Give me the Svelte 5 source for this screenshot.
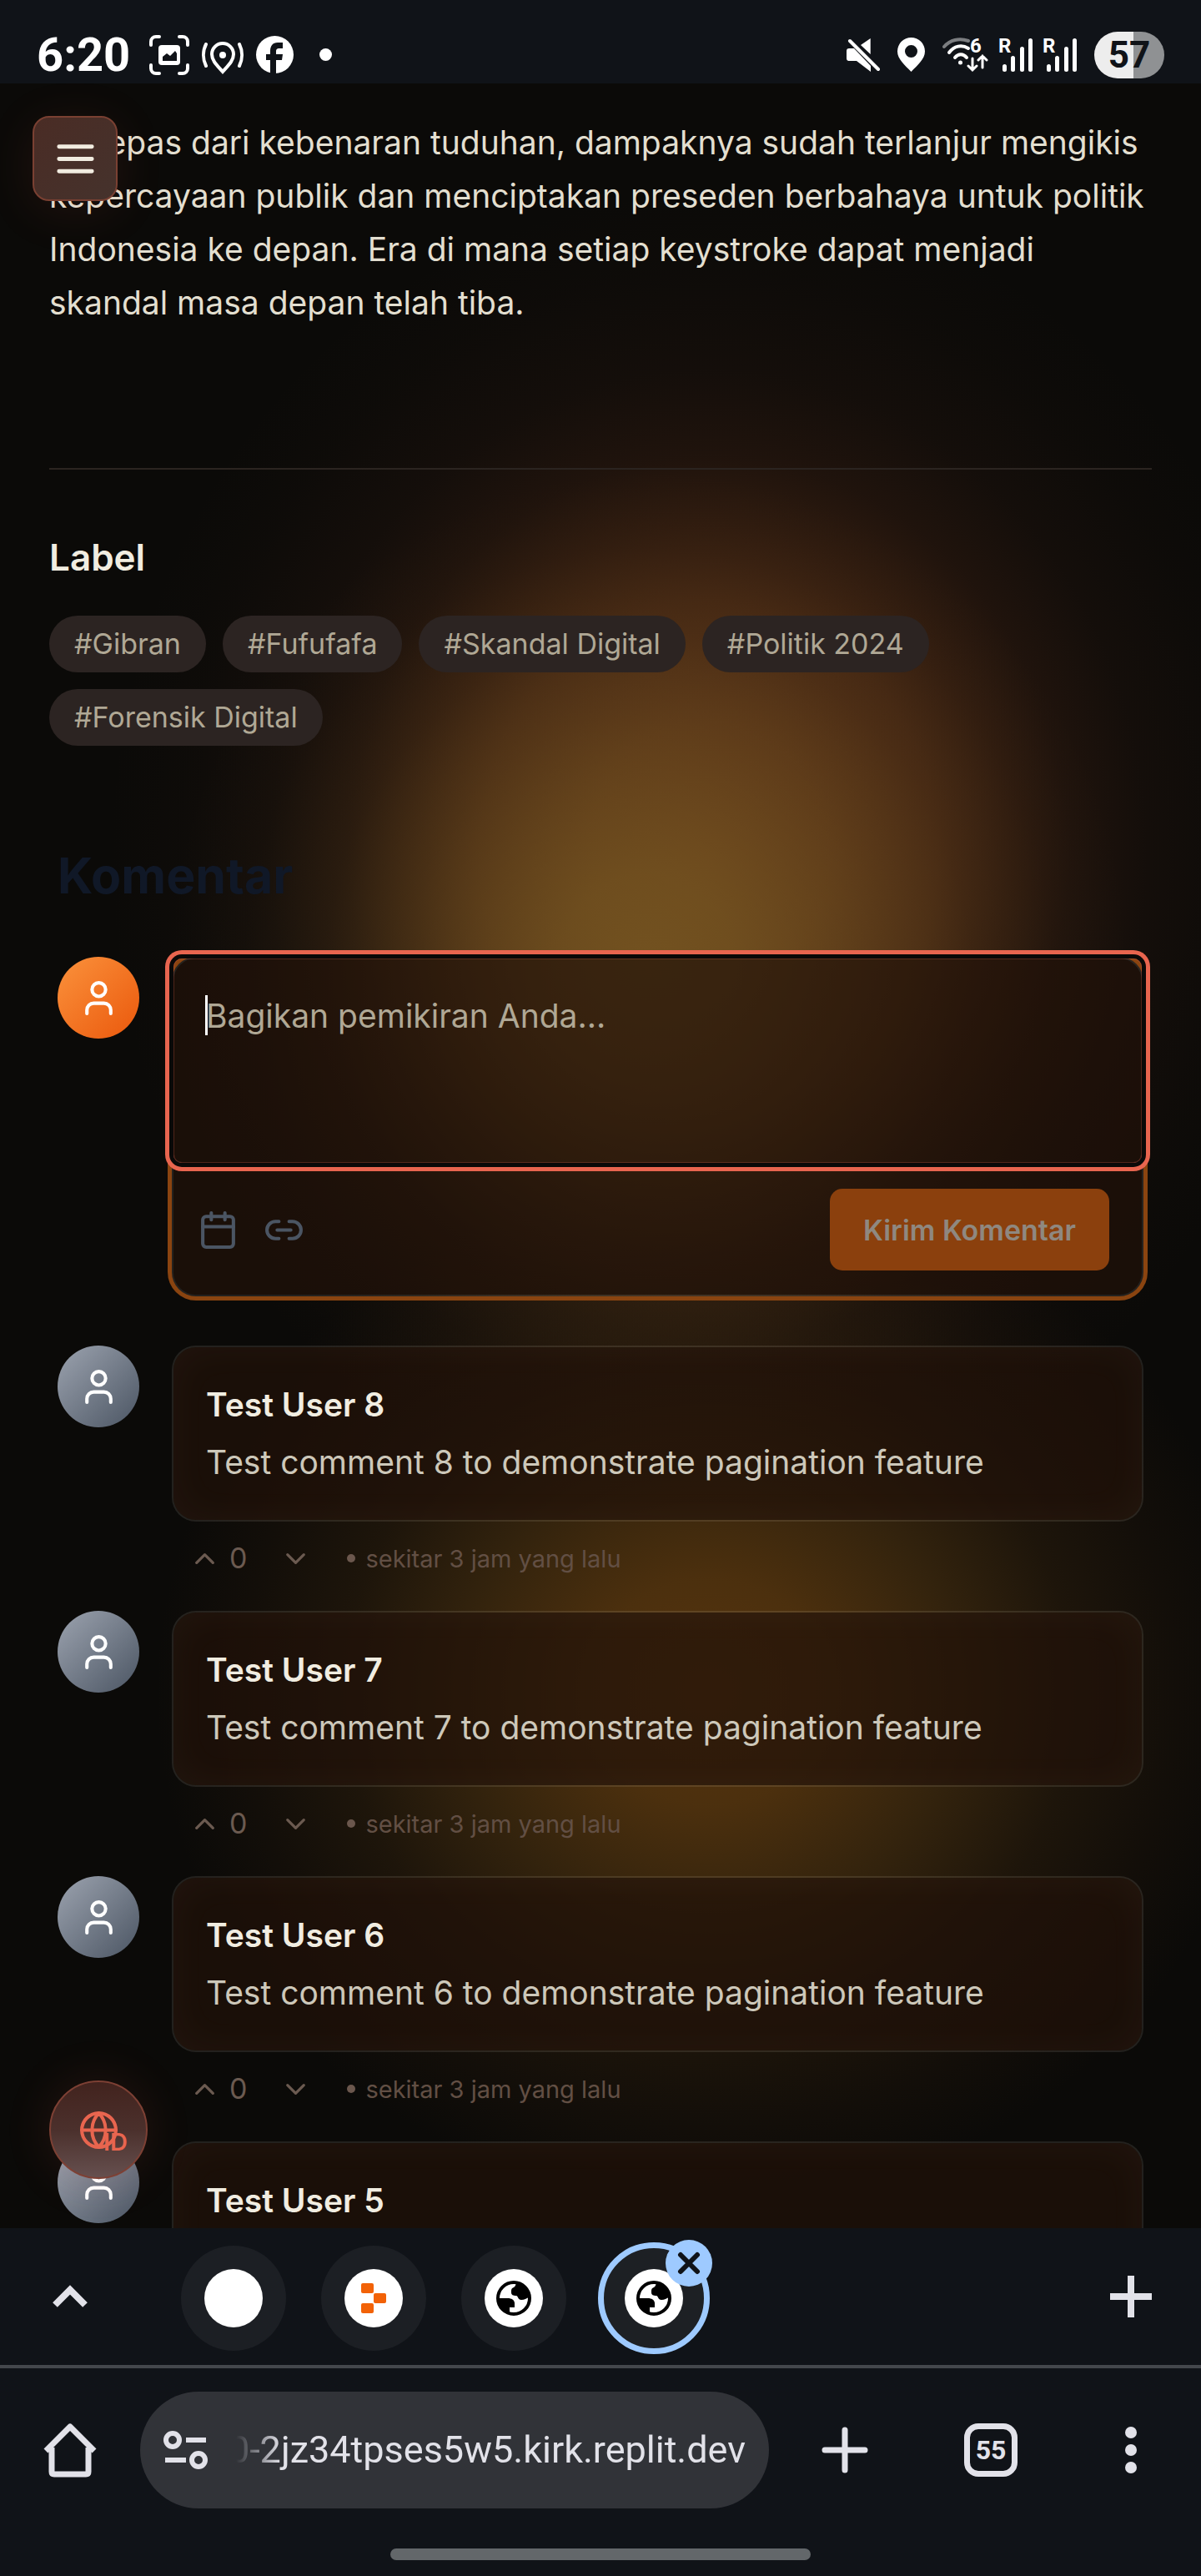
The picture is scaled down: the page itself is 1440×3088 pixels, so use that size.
<script>
  const tags = ['#Gibran', '#Fufufafa', '#Skandal Digital', '#Politik 2024', '#Forensik Digital'];
  const comments = [8, 7, 6, 5].map((n) => ({
    id: n,
    name: `Test User ${n}`,
    text: `Test comment ${n} to demonstrate pagination feature`,
    votes: 0,
    time: 'sekitar 3 jam yang lalu'
  }));
  let draft = $state('');
  let address = $state('0-2jz34tpses5w5.kirk.replit.dev');
</script>

{#snippet person()}
  <svg class="icon-md" viewBox="0 0 24 24" fill="none" stroke="#fff" stroke-width="2" stroke-linecap="round" stroke-linejoin="round" aria-hidden="true">
    <path d="M19 21v-2a4 4 0 0 0-4-4H9a4 4 0 0 0-4 4v2" />
    <circle cx="12" cy="7" r="4" />
  </svg>
{/snippet}

{#snippet signal()}
  <svg width="41" height="58" viewBox="0 -8 41 58" fill="#fff" aria-hidden="true">
    <text x="0" y="18" class="tiny">R</text>
    <rect x="5" y="32" width="5" height="9" rx="2.5" />
    <rect x="15" y="22" width="5" height="19" rx="2.5" />
    <rect x="26" y="11" width="5" height="30" rx="2.5" />
    <rect x="36" y="1" width="5" height="40" rx="2.5" />
  </svg>
{/snippet}

{#snippet world()}
  <span class="favicon">
    <svg width="42" height="42" viewBox="0 0 42 42" aria-hidden="true">
      <circle cx="21" cy="21" r="19" fill="#fff" stroke="#000" stroke-width="4" />
      <path d="M24 3c-1 2-1 4-3 5c-3 1-3 3-3 6c0 3 2 4 6 4c2 0 2 5 6 5c4 0 6-2 9-3c1-9-6-16-15-17z" fill="#000" />
      <path d="M3 21h11c4 0 8 2 8 6v5h-6v7C8 37 2 30 3 21z" fill="#000" />
    </svg>
  </span>
{/snippet}

<div class="phone">
  <header class="status">
    <span class="clock">6:20</span>
    <div class="notices">
      <svg width="48" height="48" viewBox="0 0 48 48" fill="none" stroke="#fff" stroke-width="4" stroke-linecap="round" aria-hidden="true">
        <path d="M2 12V8a6 6 0 0 1 6-6h4M36 2h4a6 6 0 0 1 6 6v4M46 36v4a6 6 0 0 1-6 6h-4M12 46H8a6 6 0 0 1-6-6v-4" />
        <rect x="11" y="12" width="26" height="24" rx="4" fill="#fff" stroke="none" />
        <path d="M16 31v-5l5-4 4 3 6-6 2 3v9z" fill="#101318" stroke="none" />
      </svg>
      <svg width="50" height="48" viewBox="0 0 50 48" fill="none" stroke="#fff" stroke-width="4" stroke-linecap="round" aria-hidden="true">
        <path d="M25 44C19 37 12 31 12 23a13 13 0 0 1 26 0c0 8-7 14-13 21z" />
        <circle cx="25" cy="24" r="4" fill="#fff" stroke="none" />
        <path d="M5 11c-4 8-4 18 0 26M45 11c4 8 4 18 0 26" />
      </svg>
      <svg width="45" height="45" viewBox="0 0 45 45" aria-hidden="true">
        <circle cx="22.500" cy="22.500" r="22.500" fill="#fff" />
        <path d="M17 45V29h-5v-7h5v-4c0-6 3-10 9-10h6v7h-4c-3 0-4 1-4 4v3h8l-1 7h-7v16z" fill="#101318" />
      </svg>
      <span class="more-dot"></span>
    </div>
    <div class="system">
      <svg width="40" height="41" viewBox="0 0 40 41" fill="#fff" aria-hidden="true">
        <path d="M17 9 28.700 1v19zM3 13h6l20 21v7L12 28H3q-3 0-3-3v-9q0-3 3-3z" />
        <path d="M4 4l34 34" stroke="#fff" stroke-width="4" stroke-linecap="round" />
      </svg>
      <svg width="33" height="41" viewBox="0 0 33 41" aria-hidden="true">
        <path fill="#fff" fill-rule="evenodd" d="M16.500 0A16.500 16.500 0 0 1 33 16.500C33 26 24 33 16.500 41C9 33 0 26 0 16.500A16.500 16.500 0 0 1 16.500 0zM16.500 9a7.500 7.500 0 1 0 0 15a7.500 7.500 0 1 0 0-15z" />
      </svg>
      <div class="network">
        <svg width="55" height="58" viewBox="0 -8 55 58" fill="none" stroke="#fff" stroke-width="4" stroke-linecap="round" aria-hidden="true">
          <path d="M2 11C9 3 20 0 31 4" stroke="#7c7e81" />
          <path d="M8 18C14 10 23 8 31 13M15 24c4-5 10-5 14 0" />
          <circle cx="21.500" cy="30" r="2.500" fill="#fff" stroke="none" />
          <text x="33" y="18" class="tiny" fill="#fff" stroke="none">6</text>
          <path d="M36 25v13M31 34l5 5 5-5M48 36V22M43 27l5-5 5 5" stroke-width="3" />
        </svg>
        {@render signal()}
        {@render signal()}
      </div>
      <span class="battery">57</span>
    </div>
  </header>

  <div class="viewport">
    <main>
      <p class="prose">
        Terlepas dari kebenaran tuduhan, dampaknya sudah terlanjur mengikis kepercayaan publik dan menciptakan
        preseden berbahaya untuk politik Indonesia ke depan. Era di mana setiap keystroke dapat menjadi skandal
        masa depan telah tiba.
      </p>

      <section class="labels">
        <h3>Label</h3>
        <div class="chips">
          {#each tags as tag}
            <a class="chip" href="#tag">{tag}</a>
          {/each}
        </div>
      </section>

      <section class="discussion">
        <h2>Komentar</h2>

        <div class="row">
          <span class="avatar own">{@render person()}</span>
          <form class="composer" onsubmit={(e) => e.preventDefault()}>
            <div class="field">
              <textarea bind:value={draft} aria-label="Komentar" placeholder="Bagikan pemikiran Anda..."></textarea>
              <span class="caret"></span>
            </div>
            <div class="tools">
              <button type="button" class="tool" aria-label="Tanggal">
                <svg class="icon-md" viewBox="0 0 24 24" fill="none" stroke="#4b5563" stroke-width="2" stroke-linecap="round" stroke-linejoin="round" aria-hidden="true">
                  <path d="M8 2v4M16 2v4M3 10h18" />
                  <rect x="3" y="4" width="18" height="18" rx="2" />
                </svg>
              </button>
              <button type="button" class="tool" aria-label="Tautan">
                <svg class="icon-md" viewBox="0 0 24 24" fill="none" stroke="#4b5563" stroke-width="2" stroke-linecap="round" stroke-linejoin="round" aria-hidden="true">
                  <path d="M9 17H7A5 5 0 0 1 7 7h2M15 7h2a5 5 0 1 1 0 10h-2M8 12h8" />
                </svg>
              </button>
              <button type="submit" class="send">Kirim Komentar</button>
            </div>
          </form>
        </div>

        {#each comments as c (c.id)}
          <article class="row">
            <span class="avatar">{@render person()}</span>
            <div class="entry">
              <div class="bubble">
                <h4>{c.name}</h4>
                <p>{c.text}</p>
              </div>
              <div class="meta">
                <button type="button" class="vote" aria-label="Suka">
                  <svg class="icon-sm" viewBox="0 0 24 24" fill="none" stroke="currentColor" stroke-width="2" stroke-linecap="round" stroke-linejoin="round" aria-hidden="true"><path d="m18 15-6-6-6 6" /></svg>
                  {c.votes}
                </button>
                <button type="button" class="vote" aria-label="Tidak suka">
                  <svg class="icon-sm" viewBox="0 0 24 24" fill="none" stroke="currentColor" stroke-width="2" stroke-linecap="round" stroke-linejoin="round" aria-hidden="true"><path d="m6 9 6 6 6-6" /></svg>
                </button>
                <time><i></i>{c.time}</time>
              </div>
            </div>
          </article>
        {/each}
      </section>
    </main>

    <button type="button" class="menu" aria-label="Menu">
      <svg class="icon-lg" viewBox="0 0 24 24" fill="none" stroke="#f1ece0" stroke-width="2" stroke-linecap="round" aria-hidden="true">
        <path d="M4 6h16M4 12h16M4 18h16" />
      </svg>
    </button>

    <button type="button" class="language" aria-label="Bahasa">
      <svg class="icon-md" viewBox="0 0 24 24" fill="none" stroke="currentColor" stroke-width="2" stroke-linecap="round" stroke-linejoin="round" aria-hidden="true">
        <circle cx="12" cy="12" r="10" />
        <path d="M12 2a14.500 14.500 0 0 0 0 20 14.500 14.500 0 0 0 0-20M2 12h20" />
      </svg>
      <span>ID</span>
    </button>
  </div>

  <footer class="browser">
    <div class="tabs">
      <button type="button" class="slot" aria-label="Perluas">
        <svg width="42" height="28" viewBox="0 0 42 28" fill="none" stroke="#e2e2e9" stroke-width="8" aria-hidden="true"><path d="M3 24 21 6l18 18" /></svg>
      </button>
      <div class="strip">
        <button type="button" class="tab" aria-label="Tab 1"><span class="favicon"></span></button>
        <button type="button" class="tab" aria-label="Tab 2">
          <span class="favicon">
            <svg width="30" height="36" viewBox="0 0 30 36" fill="#f26207" aria-hidden="true">
              <rect width="15" height="12" rx="2" />
              <rect x="15" y="12" width="15" height="12" rx="2" />
              <rect y="24" width="15" height="12" rx="2" />
            </svg>
          </span>
        </button>
        <button type="button" class="tab" aria-label="Tab 3">{@render world()}</button>
        <div class="current">
          <button type="button" class="tab active" aria-label="Tab 4">{@render world()}</button>
          <button type="button" class="close" aria-label="Tutup tab">
            <svg width="28" height="28" viewBox="0 0 28 28" stroke="#101318" stroke-width="6" stroke-linecap="round" aria-hidden="true"><path d="M4 4l20 20M24 4 4 24" /></svg>
          </button>
        </div>
      </div>
      <button type="button" class="slot" aria-label="Tab baru">
        <svg width="50" height="50" viewBox="0 0 50 50" stroke="#e2e2e9" stroke-width="8" aria-hidden="true"><path d="M25 0v50M0 25h50" /></svg>
      </button>
    </div>

    <div class="toolbar">
      <button type="button" class="slot" aria-label="Beranda">
        <svg width="64" height="66" viewBox="0 0 64 66" fill="none" stroke="#e2e2e9" stroke-width="7" stroke-linejoin="round" aria-hidden="true">
          <path d="M3 34 32 5l29 29" />
          <path d="M10 30v29q0 3 3 3h38q3 0 3-3V30" />
        </svg>
      </button>
      <div class="address">
        <svg width="53" height="46" viewBox="0 0 53 46" fill="none" stroke="#e2e2e9" stroke-width="6" aria-hidden="true">
          <circle cx="11" cy="11" r="8" />
          <path d="M27 11h24M2 35h25" />
          <circle cx="42" cy="35" r="8" />
        </svg>
        <input type="text" bind:value={address} aria-label="Alamat" />
      </div>
      <button type="button" class="slot wide" aria-label="Tambah">
        <svg width="56" height="56" viewBox="0 0 56 56" stroke="#e2e2e9" stroke-width="7" stroke-linecap="round" aria-hidden="true"><path d="M28 4v48M4 28h48" /></svg>
      </button>
      <button type="button" class="slot" aria-label="Daftar tab"><span class="count">55</span></button>
      <button type="button" class="slot" aria-label="Opsi">
        <svg width="14" height="56" viewBox="0 0 14 56" fill="#e2e2e9" aria-hidden="true">
          <circle cx="7" cy="7" r="7" /><circle cx="7" cy="28" r="7" /><circle cx="7" cy="49" r="7" />
        </svg>
      </button>
    </div>
    <div class="handle"></div>
  </footer>
</div>

<style>
  :global(body) {
    margin: 0;
    background: #0b0a08;
  }

  .phone {
    box-sizing: border-box;
    display: flex;
    flex-direction: column;
    height: 100vh;
    font-family: Inter, 'Liberation Sans', sans-serif;
    color: #e3dfd0;
  }

  .phone :global(*) {
    box-sizing: border-box;
  }

  button {
    display: flex;
    align-items: center;
    justify-content: center;
    padding: 0;
    border: 0;
    background: none;
    color: inherit;
    font: inherit;
  }

  svg {
    display: block;
    flex: none;
  }

  h2,
  h3,
  h4,
  p {
    margin: 0;
  }

  .icon-sm {
    width: 39px;
    height: 39px;
  }

  .icon-md {
    width: 49px;
    height: 49px;
  }

  .icon-lg {
    width: 59px;
    height: 59px;
  }

  /* Status bar */
  .status {
    display: flex;
    flex: none;
    align-items: center;
    height: 100px;
    padding: 31px 44px 0;
    background: #101318;
    color: #fff;
    font-family: Roboto, sans-serif;
    font-weight: 700;
  }

  .clock {
    font-size: 56px;
    line-height: 58px;
  }

  .notices {
    display: flex;
    align-items: center;
    gap: 15px;
    margin-left: 23px;
  }

  .more-dot {
    width: 15px;
    height: 15px;
    margin-left: 16px;
    border-radius: 50%;
    background: #fff;
  }

  .system {
    display: flex;
    align-items: center;
    gap: 21px;
    margin-left: auto;
  }

  .network {
    display: flex;
    gap: 12px;
  }

  .tiny {
    font-size: 24px;
    font-weight: 700;
    font-family: Roboto, sans-serif;
  }

  .battery {
    width: 84px;
    border-radius: 28px;
    background: linear-gradient(90deg, #ededed 56%, #8f9193 56%);
    color: #101318;
    font-size: 44px;
    line-height: 56px;
    text-align: center;
  }

  /* Page */
  .viewport {
    position: relative;
    flex: 1;
    min-height: 0;
    overflow: hidden;
    background:
      radial-gradient(
        40% 23% at 54% 41%,
        rgb(122 90 34 / 0.8) 0%,
        rgb(122 90 34 / 0.7) 18%,
        rgb(122 90 34 / 0.5) 34%,
        rgb(122 90 34 / 0.3) 50%,
        rgb(122 90 34 / 0.12) 67%,
        rgb(122 90 34 / 0.03) 84%,
        rgb(122 90 34 / 0) 100%
      ),
      radial-gradient(
        50% 31% at 59% 36%,
        rgb(104 58 26 / 0.85) 0%,
        rgb(104 58 26 / 0.76) 20%,
        rgb(104 56 26 / 0.58) 38%,
        rgb(104 54 26 / 0.38) 50%,
        rgb(104 52 28 / 0.22) 60%,
        rgb(100 50 30 / 0.1) 73%,
        rgb(100 50 30 / 0.03) 88%,
        rgb(100 50 30 / 0) 100%
      ),
      radial-gradient(
        46% 24% at 59% 75%,
        rgb(90 54 14 / 0.95) 0%,
        rgb(90 56 15 / 0.82) 22%,
        rgb(88 58 18 / 0.52) 45%,
        rgb(88 56 18 / 0.24) 66%,
        rgb(88 52 18 / 0.1) 84%,
        rgb(88 50 18 / 0) 100%
      ),
      #0b0a08;
  }

  main {
    padding: 39px 59px 0;
  }

  .prose {
    font-size: 39px;
    line-height: 64px;
  }

  .labels {
    margin-top: 166px;
    padding-top: 71px;
    border-top: 2px solid #2b2420;
  }

  h3 {
    margin-bottom: 35px;
    color: #f1ede1;
    font-size: 44px;
    font-weight: 600;
    line-height: 69px;
  }

  .chips {
    display: flex;
    flex-wrap: wrap;
    gap: 20px;
  }

  .chip {
    padding: 10px 30px;
    border-radius: 34px;
    background: #2c2422;
    color: #b0a895;
    font-size: 34px;
    line-height: 48px;
    text-decoration: none;
  }

  .discussion {
    margin-top: 117px;
    padding: 0 10px;
  }

  h2 {
    margin-bottom: 58px;
    color: #101827;
    font-size: 59px;
    font-weight: 700;
    line-height: 78px;
  }

  .row {
    display: flex;
    align-items: flex-start;
    gap: 39px;
  }

  .avatar {
    display: grid;
    flex: none;
    place-items: center;
    width: 98px;
    height: 98px;
    border-radius: 50%;
    background: linear-gradient(135deg, #9ca3af, #4b5563);
  }

  .avatar.own {
    background: linear-gradient(135deg, #fb923c, #ea580c);
  }

  .composer,
  .bubble {
    border: 2px solid rgb(255 245 225 / 0.1);
    border-radius: 29px;
    background: rgb(33 17 8 / 0.7);
    background-clip: padding-box;
    box-shadow: inset 0 0 50px rgb(255 240 210 / 0.04);
  }

  .composer {
    flex: 1;
    margin-bottom: 59px;
    box-shadow: 0 0 0 5px #8a4410;
  }

  .field {
    position: relative;
    display: flex;
  }

  textarea {
    flex: 1;
    height: 245px;
    padding: 38px;
    border: 1px solid rgb(232 101 79 / 0.25);
    border-radius: 10px;
    outline: 0;
    background: none;
    box-shadow:
      0 0 0 5px #0a0908,
      0 0 0 10px #e8654f;
    color: #f1ede1;
    font: inherit;
    font-size: 39px;
    line-height: 59px;
    resize: none;
  }

  textarea::placeholder {
    color: #b0a895;
    opacity: 1;
  }

  .caret {
    position: absolute;
    top: 44px;
    left: 38px;
    width: 3px;
    height: 48px;
    background: #fff;
  }

  .tools {
    display: flex;
    align-items: center;
    gap: 10px;
    padding: 29px 39px 29px 19px;
    border-top: 2px solid #37373d;
  }

  .tool {
    padding: 10px;
  }

  .send {
    height: 98px;
    margin-left: auto;
    padding: 0 40px;
    border-radius: 15px;
    background: #8b400d;
    color: #8f8880;
    font-size: 34px;
    font-weight: 600;
  }

  .entry {
    flex: 1;
    margin-bottom: 39px;
  }

  .bubble {
    padding: 39px 39px 40px;
    font-size: 39px;
    line-height: 59px;
  }

  h4 {
    margin-bottom: 10px;
    color: #f1ede1;
    font-size: 39px;
    font-weight: 600;
    line-height: 59px;
  }

  .bubble p {
    color: #cdc8ba;
  }

  .meta {
    display: flex;
    align-items: center;
    height: 48px;
    margin-top: 20px;
    padding-left: 20px;
    color: #6b5a50;
  }

  .vote {
    gap: 10px;
    margin-right: 39px;
    font-size: 34px;
    line-height: 48px;
  }

  time {
    display: flex;
    align-items: center;
    gap: 12px;
    padding-left: 3px;
    color: #624f44;
    font-size: 29px;
    line-height: 39px;
  }

  time i {
    width: 10px;
    height: 10px;
    border-radius: 50%;
    background: #6b574d;
  }

  .menu {
    position: absolute;
    top: 39px;
    left: 39px;
    width: 102px;
    height: 102px;
    border: 2px solid #7a4032;
    border-radius: 20px;
    background: linear-gradient(135deg, #4a2c25, #45322c);
    box-shadow: 0 10px 60px rgb(232 101 79 / 0.1);
  }

  .language {
    position: absolute;
    bottom: 59px;
    left: 59px;
    width: 118px;
    height: 118px;
    border: 2px solid #7d4034;
    border-radius: 50%;
    background: linear-gradient(#42231e, #4b302c 50%, #66504f);
    box-shadow: 0 0 60px rgb(232 101 79 / 0.12);
    color: #e8654f;
  }

  .language span {
    position: absolute;
    right: 22px;
    bottom: 26px;
    font-size: 29px;
    font-weight: 600;
    line-height: 32px;
  }

  /* Browser controls */
  .browser {
    flex: none;
    padding-bottom: 19px;
    background: #101318;
    color: #e2e2e9;
    font-family: Roboto, sans-serif;
  }

  .tabs {
    display: flex;
    align-items: center;
    height: 168px;
    border-bottom: 4px solid #44474c;
  }

  .slot {
    flex: none;
    width: 168px;
    height: 140px;
  }

  .slot.wide {
    width: 182px;
  }

  .strip {
    display: flex;
    flex: 1;
    align-items: center;
    gap: 42px;
    padding: 4px 0 0 49px;
  }

  .tab {
    flex: none;
    width: 126px;
    height: 126px;
    border-radius: 50%;
    background: #1c1f24;
  }

  .current {
    position: relative;
  }

  .tab.active {
    background: #1d2024;
    outline: 7px solid #9ecaff;
    outline-offset: -3px;
  }

  .close {
    position: absolute;
    top: -7px;
    right: -7px;
    width: 56px;
    height: 56px;
    border-radius: 50%;
    background: #9ecaff;
  }

  .favicon {
    display: grid;
    place-items: center;
    width: 70px;
    height: 70px;
    border-radius: 50%;
    background: #fff;
  }

  .toolbar {
    display: flex;
    align-items: center;
    padding: 28px 0;
  }

  .address {
    display: flex;
    flex: 1;
    align-items: center;
    gap: 12px;
    height: 140px;
    padding: 0 28px;
    border-radius: 70px;
    background: #313338;
  }

  input {
    flex: 1;
    min-width: 0;
    padding: 0;
    border: 0;
    outline: 0;
    background: none;
    color: inherit;
    font: inherit;
    font-size: 45px;
    line-height: 60px;
    text-align: right;
    mask-image: linear-gradient(90deg, transparent 22px, #000 76px);
  }

  .count {
    display: grid;
    place-items: center;
    width: 64px;
    height: 64px;
    border: 7px solid #e2e2e9;
    border-radius: 17px;
    font-size: 32px;
    font-weight: 700;
  }

  .handle {
    width: 35%;
    height: 14px;
    margin: 20px auto 0;
    border-radius: 7px;
    background: #63676a;
  }
</style>
